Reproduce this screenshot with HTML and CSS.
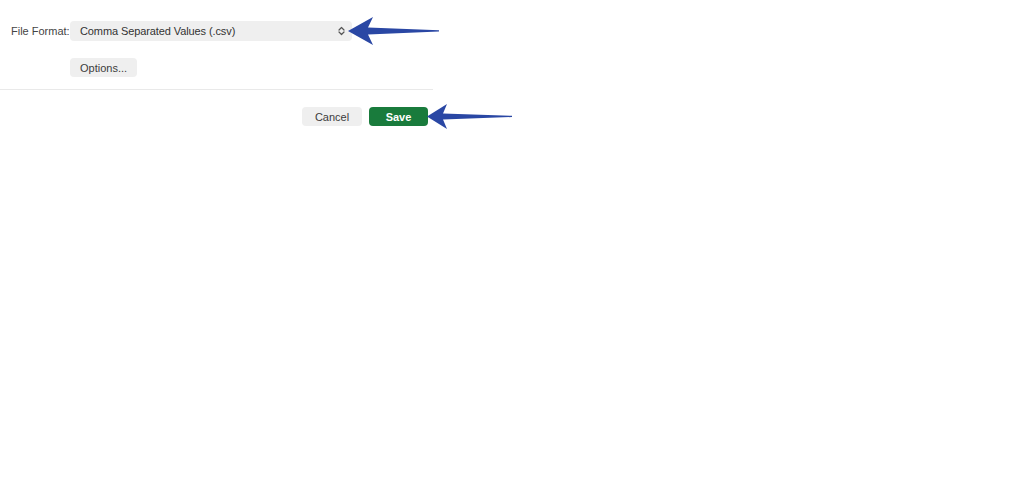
FILE: index.html
```html
<!DOCTYPE html>
<html lang="en">
<head>
<meta charset="utf-8">
<title>Save dialog</title>
<link rel="stylesheet" href="styles.css">
</head>
<body>
<div class="dialog">
  <div class="format-row">
    <span class="label">File Format:</span>
    <div class="select">
      <span class="select-text">Comma Separated Values (.csv)</span>
      <svg class="chev" width="7" height="10" viewBox="0 0 7 10"><path d="M1 4 L3.5 1.5 L6 4 M1 6 L3.5 8.5 L6 6" fill="none" stroke="#555" stroke-width="1.2" stroke-linecap="round" stroke-linejoin="round"/></svg>
    </div>
  </div>
  <div class="options-row">
    <button class="btn">Options...</button>
  </div>
  <div class="sep"></div>
  <div class="actions">
    <button class="btn cancel">Cancel</button>
    <button class="btn save">Save</button>
  </div>
</div>
<svg class="arrow arrow-1" width="92" height="28" viewBox="0 0 92 28"><path d="M0 14 L25 0 L20 10.5 L91 13.2 L91 14.4 L20 17.5 L25 28 Z" fill="#2a47a4"/></svg>
<svg class="arrow arrow-2" width="86" height="26" viewBox="0 0 86 26"><path d="M0 12.5 L20 0 L16 9.5 L85 11.8 L85 13 L16 15.5 L20 25 Z" fill="#2a47a4"/></svg>
</body>
</html>
```
FILE: styles.css
```css
html, body {
  margin: 0;
  padding: 0;
  background: #ffffff;
}
body {
  font-family: "Liberation Sans", Arial, sans-serif;
  font-size: 11px;
  color: #3c3c3c;
  position: relative;
  width: 1024px;
  height: 478px;
}
.dialog {
  width: 433px;
  padding-top: 21px;
}
.format-row {
  display: flex;
  align-items: center;
  gap: 2px;
  padding-left: 11px;
}
.label {
  width: 57px;
  flex-shrink: 0;
  white-space: nowrap;
  color: #444;
}
.select {
  width: 282px;
  flex-shrink: 0;
  height: 20px;
  box-sizing: border-box;
  background: #efefef;
  border-radius: 4px;
  display: flex;
  align-items: center;
  justify-content: space-between;
  padding: 0 7px 0 10px;
}
.select-text {
  color: #333;
  letter-spacing: -0.1px;
}
.chev {
  display: block;
}
.options-row {
  padding-left: 70px;
  margin-top: 17px;
}
.btn {
  font-family: "Liberation Sans", Arial, sans-serif;
  font-size: 11px;
  color: #3c3c3c;
  border: none;
  background: #efefef;
  border-radius: 4px;
  height: 19px;
  padding: 0 10px;
  margin: 0;
  display: block;
}
.options-row .btn {
  width: 67px;
}
.sep {
  height: 1px;
  background: #e9e9e9;
  margin-top: 12px;
}
.actions {
  display: flex;
  justify-content: flex-end;
  gap: 7px;
  padding-right: 5px;
  margin-top: 17px;
}
.cancel {
  width: 60px;
}
.save {
  width: 59px;
  background: #197b3c;
  color: #ffffff;
  font-weight: bold;
}
.arrow {
  position: absolute;
}
.arrow-1 {
  left: 348px;
  top: 17px;
}
.arrow-2 {
  left: 427px;
  top: 104px;
}
```
